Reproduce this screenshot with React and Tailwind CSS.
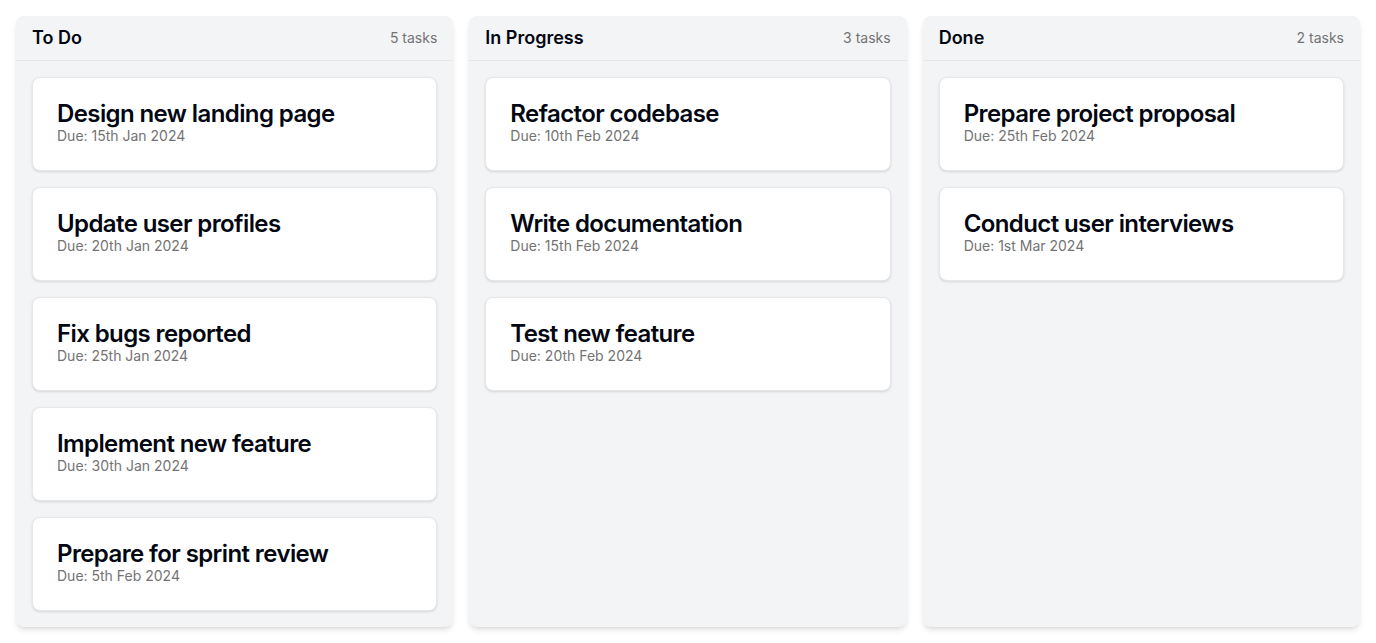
const columns = [
  {
    title: "To Do",
    tasks: [
      { title: "Design new landing page", due: "15th Jan 2024" },
      { title: "Update user profiles", due: "20th Jan 2024" },
      { title: "Fix bugs reported", due: "25th Jan 2024" },
      { title: "Implement new feature", due: "30th Jan 2024" },
      { title: "Prepare for sprint review", due: "5th Feb 2024" },
    ],
  },
  {
    title: "In Progress",
    tasks: [
      { title: "Refactor codebase", due: "10th Feb 2024" },
      { title: "Write documentation", due: "15th Feb 2024" },
      { title: "Test new feature", due: "20th Feb 2024" },
    ],
  },
  {
    title: "Done",
    tasks: [
      { title: "Prepare project proposal", due: "25th Feb 2024" },
      { title: "Conduct user interviews", due: "1st Mar 2024" },
    ],
  },
];

function TaskCard({ task }) {
  return (
    <div className="rounded-lg border border-gray-200 bg-white p-6 shadow-sm">
      <h3 className="text-2xl font-semibold leading-none tracking-tight text-gray-950">
        {task.title}
      </h3>
      <p className="text-sm text-neutral-500">Due: {task.due}</p>
    </div>
  );
}

export default function App() {
  return (
    <div
      className="min-h-screen bg-white p-4"
      style={{ fontFamily: "Inter, 'Noto Sans', sans-serif" }}
    >
      <div className="grid grid-cols-3 gap-4">
        {columns.map((col) => (
          <div key={col.title} className="rounded-lg bg-gray-100 shadow-md">
            {/* Header */}
            <div className="flex items-center justify-between border-b border-gray-200 px-4 py-2">
              <h2 className="text-lg font-semibold text-gray-950">{col.title}</h2>
              <span className="text-sm text-neutral-500">
                {col.tasks.length} tasks
              </span>
            </div>

            {/* Tasks */}
            <div className="space-y-4 p-4">
              {col.tasks.map((task) => (
                <TaskCard key={task.title} task={task} />
              ))}
            </div>
          </div>
        ))}
      </div>
    </div>
  );
}
